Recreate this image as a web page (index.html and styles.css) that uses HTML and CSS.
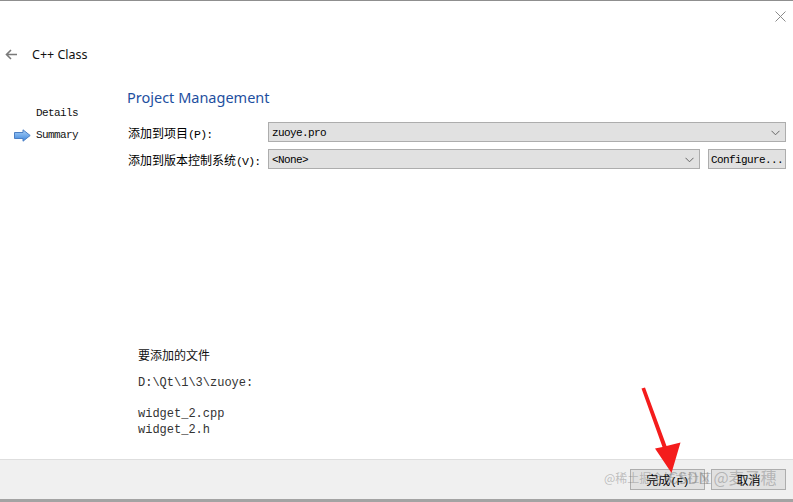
FILE: index.html
```html
<!DOCTYPE html>
<html>
<head>
<meta charset="utf-8">
<link rel="stylesheet" href="styles.css">
</head>
<body>
<div class="window">
  <div class="titlebar">
    <svg class="close" width="11" height="11" viewBox="0 0 11 11"><path d="M0.5 0.5L10.5 10.5M10.5 0.5L0.5 10.5" stroke="#8a8a8a" stroke-width="1"/></svg>
  </div>
  <div class="header">
    <svg class="back" width="13" height="11" viewBox="0 0 13 11"><path d="M12 5.5H1.5M6 1L1.5 5.5L6 10" fill="none" stroke="#7a7a7a" stroke-width="1.6"/></svg>
    <span class="wtitle">C++ Class</span>
  </div>
  <div class="main">
    <div class="sidebar">
      <div class="step">Details</div>
      <div class="step">
        <svg class="cur" width="17" height="13" viewBox="0 0 17 13">
          <defs><linearGradient id="g" x1="0" y1="0" x2="0" y2="1"><stop offset="0" stop-color="#a9d0f7"/><stop offset="1" stop-color="#3d86dd"/></linearGradient></defs>
          <path d="M0.5 3.5H9V0.8L16.2 6.5L9 12.2V9.5H0.5Z" fill="url(#g)" stroke="#4b7fc4" stroke-width="1"/>
        </svg>Summary</div>
    </div>
    <div class="content">
      <h1 class="ptitle">Project Management</h1>
      <div class="form">
        <div class="row">
          <span class="label">添加到项目<span class="m">(P):</span></span>
          <div class="combo"><span class="ctext">zuoye.pro</span><svg class="chev" width="9" height="6" viewBox="0 0 9 6"><path d="M0.5 0.8L4.5 4.8L8.5 0.8" fill="none" stroke="#666" stroke-width="1"/></svg></div>
        </div>
        <div class="row">
          <span class="label">添加到版本控制系统<span class="m">(V):</span></span>
          <div class="combo"><span class="ctext">&lt;None&gt;</span><svg class="chev" width="9" height="6" viewBox="0 0 9 6"><path d="M0.5 0.8L4.5 4.8L8.5 0.8" fill="none" stroke="#666" stroke-width="1"/></svg></div>
          <button class="cfg">Configure...</button>
        </div>
      </div>
      <div class="files">
        <div class="fhead">要添加的文件</div>
        <pre class="flist">D:\Qt\1\3\zuoye:

widget_2.cpp
widget_2.h</pre>
      </div>
    </div>
  </div>
  <div class="footer">
    <button class="btn">完成<span class="m">(F)</span></button>
    <button class="btn">取消</button>
  </div>
</div>
<div class="wm wm1">@稀土掘金技术社区</div>
<div class="wm wm2">CSDN @麦子穗</div>
<svg class="redarrow" width="793" height="502" viewBox="0 0 793 502">
  <path d="M641.5 388.5L645 387.5L666.5 446L680.5 442.5L671.5 473L655 448.5L662.5 447Z" fill="#f41c1c"/>
</svg>
</body>
</html>
```

FILE: styles.css
```css
html, body {
  margin: 0;
  padding: 0;
}
body {
  width: 793px;
  height: 502px;
  overflow: hidden;
  background: #ffffff;
  position: relative;
  font-family: "Noto Sans CJK SC", sans-serif;
  color: #000;
}
.window {
  width: 793px;
  height: 502px;
  box-sizing: border-box;
  border-top: 1px solid #8f8f8f;
  display: flex;
  flex-direction: column;
}
.titlebar {
  height: 29px;
  display: flex;
  justify-content: flex-end;
  align-items: center;
  padding-right: 6px;
}
.close {
  margin-right: 1px;
  margin-top: 1px;
}
.header {
  height: 48px;
  display: flex;
  align-items: center;
  padding-left: 5px;
}
.back {
  margin-right: 14px;
}
.wtitle {
  font-family: "Noto Sans", "Open Sans", sans-serif;
  font-size: 12.5px;
  color: #111;
}
.main {
  flex: 1;
  display: flex;
}
.sidebar {
  width: 127px;
  padding-top: 24px;
  box-sizing: border-box;
}
.step {
  height: 22px;
  line-height: 22px;
  padding-left: 36px;
  font-family: "Liberation Mono", monospace;
  font-size: 11px;
  letter-spacing: -0.6px;
  position: relative;
  color: #111;
}
.cur {
  position: absolute;
  left: 14px;
  top: 5px;
}
.content {
  flex: 1;
  padding-right: 7px;
  display: flex;
  flex-direction: column;
}
.ptitle {
  margin: 9px 0 0 0;
  font-family: "Noto Sans", "Open Sans", sans-serif;
  font-weight: normal;
  font-size: 14.5px;
  line-height: 20px;
  color: #1e4fa0;
}
.form {
  margin-top: 15px;
  display: flex;
  flex-direction: column;
  gap: 7px;
}
.row {
  display: flex;
  align-items: center;
  height: 20px;
}
.label {
  width: 140px;
  padding-left: 1px;
  font-size: 12px;
  white-space: nowrap;
}
.m {
  font-family: "Liberation Mono", monospace;
  font-size: 11.5px;
  letter-spacing: -0.8px;
}
.combo {
  flex: 1;
  height: 20px;
  box-sizing: border-box;
  border: 1px solid #adadad;
  background: #e1e1e1;
  display: flex;
  align-items: center;
  justify-content: space-between;
  padding: 1px 5px 0 3px;
}
.ctext {
  font-family: "Liberation Mono", monospace;
  font-size: 11px;
  letter-spacing: -0.6px;
}
.cfg {
  margin-left: 8px;
  width: 78px;
  height: 20px;
  box-sizing: border-box;
  border: 1px solid #adadad;
  background: #e1e1e1;
  font-family: "Liberation Mono", monospace;
  font-size: 11px;
  letter-spacing: -0.6px;
  padding: 1px 0 0 0;
  color: #000;
}
.files {
  margin-top: 177px;
  padding-left: 11px;
}
.fhead {
  font-size: 12px;
  line-height: 18px;
  color: #111;
}
.flist {
  margin: 12px 0 0 0;
  font-family: "Liberation Mono", monospace;
  font-size: 12px;
  line-height: 15.5px;
  color: #333;
}
.footer {
  height: 43px;
  box-sizing: border-box;
  background: #f0f0f0;
  border-top: 1px solid #dedede;
  border-bottom: 3px solid #a3a3a3;
  display: flex;
  justify-content: flex-end;
  align-items: center;
  gap: 6px;
  padding-right: 7px;
}
.btn {
  width: 75px;
  height: 21px;
  box-sizing: border-box;
  border: 1px solid #adadad;
  background: #e1e1e1;
  font-family: "Noto Sans CJK SC", sans-serif;
  font-size: 12px;
  padding: 0;
  color: #000;
}
.wm {
  position: absolute;
  font-family: "Noto Sans CJK SC", sans-serif;
  color: rgba(110, 110, 110, 0.4);
  white-space: nowrap;
  pointer-events: none;
}
.wm1 {
  left: 604px;
  top: 469px;
  font-size: 12px;
}
.wm2 {
  left: 668px;
  top: 465px;
  font-size: 16px;
}
.redarrow {
  position: absolute;
  left: 0;
  top: 0;
  pointer-events: none;
}
```
